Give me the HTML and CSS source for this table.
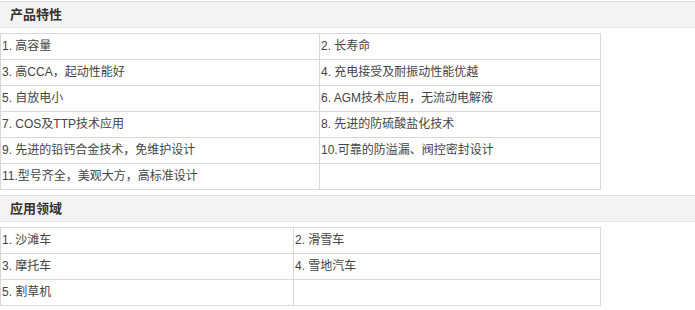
FILE: index.html
```html
<!DOCTYPE html>
<html lang="zh-CN">
<head>
<meta charset="utf-8">
<title>产品特性</title>
<link rel="stylesheet" href="styles.css">
</head>
<body>
<div class="page">
  <div class="section-title">产品特性</div>
  <table class="spec spec-features">
    <colgroup><col class="c1"><col class="c2"></colgroup>
    <tr><td>1. 高容量</td><td>2. 长寿命</td></tr>
    <tr><td>3. 高CCA，起动性能好</td><td>4. 充电接受及耐振动性能优越</td></tr>
    <tr><td>5. 自放电小</td><td>6. AGM技术应用，无流动电解液</td></tr>
    <tr><td>7. COS及TTP技术应用</td><td>8. 先进的防硫酸盐化技术</td></tr>
    <tr><td>9. 先进的铅钙合金技术，免维护设计</td><td>10.可靠的防溢漏、阀控密封设计</td></tr>
    <tr><td>11.型号齐全，美观大方，高标准设计</td><td></td></tr>
  </table>
  <div class="section-title">应用领域</div>
  <table class="spec spec-apps">
    <colgroup><col class="c1"><col class="c2"></colgroup>
    <tr><td>1. 沙滩车</td><td>2. 滑雪车</td></tr>
    <tr><td>3. 摩托车</td><td>4. 雪地汽车</td></tr>
    <tr><td>5. 割草机</td><td></td></tr>
  </table>
</div>
</body>
</html>
```
FILE: styles.css
```css
html, body {
  margin: 0;
  padding: 0;
  background: #ffffff;
}
body {
  font-family: "Liberation Sans", "Noto Sans CJK SC", sans-serif;
  font-size: 12px;
  color: #333333;
}
.page {
  padding-top: 1px;
  width: 695px;
}
.section-title {
  height: 25px;
  line-height: 25px;
  border-top: 1px solid #dedede;
  border-bottom: 1px solid #e6e6e6;
  background: #f3f3f3;
  padding-left: 10px;
  font-size: 13px;
  font-weight: bold;
  color: #333333;
  margin-bottom: 5px;
}
.spec {
  border-collapse: collapse;
  table-layout: fixed;
  width: 601px;
  margin-bottom: 5px;
}
.spec td {
  border: 1px solid #d8d8d8;
  height: 25px;
  padding: 0 0 0 1px;
  line-height: 25px;
  white-space: nowrap;
  color: #444444;
  vertical-align: middle;
}
.spec-features .c1 { width: 319px; }
.spec-apps .c1 { width: 293px; }
```
